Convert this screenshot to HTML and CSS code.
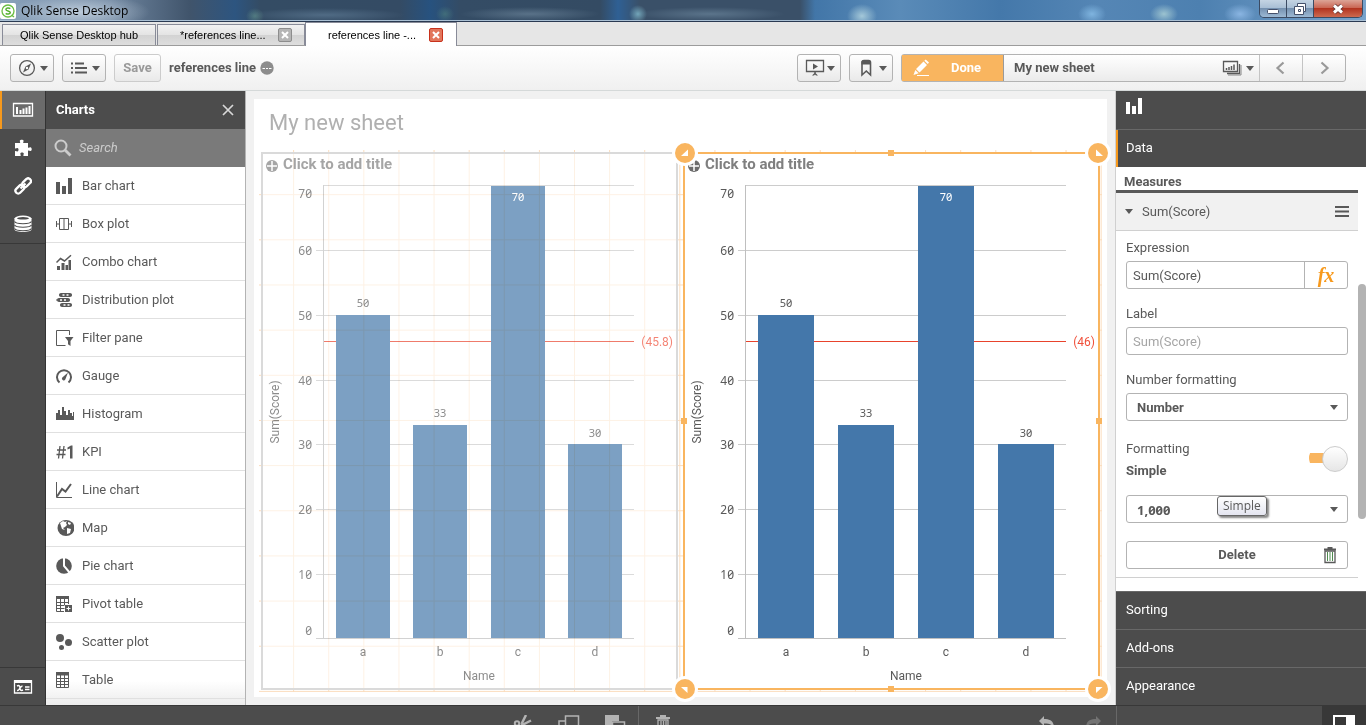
FILE: index.html
```html
<!DOCTYPE html>
<html lang="en">
<head>
<meta charset="utf-8">
<title>Qlik Sense Desktop</title>
<link rel="stylesheet" href="styles.css">
</head>
<body>
<header class="titlebar">
  <svg class="app-logo" width="16" height="16" viewBox="0 0 16 16"><rect width="16" height="16" rx="2" fill="#fff"/><circle cx="8" cy="8" r="6" fill="none" stroke="#6cbe45" stroke-width="1.3"/><path d="M11.500 12l2.500 2" stroke="#6cbe45" stroke-width="1.500"/><path d="M10.300 5.600C9 4.500 5.900 4.700 5.900 6.400c0 2 4.400 1 4.400 3.100 0 1.800-3.200 1.900-4.600.8" fill="none" stroke="#55b030" stroke-width="1.500"/></svg>
  <span class="app-name">Qlik Sense Desktop</span>
  <div class="window-controls">
    <button class="win" aria-label="Minimize"><svg width="14" height="12" viewBox="0 0 14 12"><rect x="1.500" y="6.500" width="11" height="4" rx="1" fill="#fff" stroke="#44506a"/></svg></button>
    <button class="win" aria-label="Restore"><svg width="14" height="14" viewBox="0 0 14 14"><path d="M4.500 1.500h8v8h-2v3h-9v-8h3z" fill="#fff" stroke="#44506a"/><path d="M5.500 7.500h2v2h-2zM4.500 4.500h6v5" fill="none" stroke="#44506a"/></svg></button>
    <button class="win win-close" aria-label="Close"><svg width="14" height="12" viewBox="0 0 14 12"><path d="M3 2.500l8 7M11 2.500l-8 7" stroke="#5a2a2a" stroke-width="4.500"/><path d="M3 2.500l8 7M11 2.500l-8 7" stroke="#fff" stroke-width="3"/></svg></button>
  </div>
</header>

<nav class="tabs">
  <a class="tab tab-hub" href="#">Qlik Sense Desktop hub</a>
  <div class="tab tab-doc"><a href="#">*references line...</a><button class="tab-close" aria-label="Close tab"><svg width="8" height="8" viewBox="0 0 8 8"><path d="M1 1l6 6M7 1L1 7" stroke="#fff" stroke-width="2"/></svg></button></div>
  <div class="tab tab-active"><a href="#">references line -...</a><button class="tab-close tab-close-red" aria-label="Close tab"><svg width="8" height="8" viewBox="0 0 8 8"><path d="M1 1l6 6M7 1L1 7" stroke="#fff" stroke-width="2"/></svg></button></div>
</nav>

<div class="toolbar">
  <button class="btn btn-menu" aria-label="Navigation"><svg width="18" height="18" viewBox="0 0 18 18"><circle cx="9" cy="9" r="7.400" fill="none" stroke="#595959" stroke-width="1.300"/><path d="M13 4.500L10.500 10.500 5 13.500 7.500 7.500z" fill="#595959"/><circle cx="9" cy="9" r="1.200" fill="#fff"/></svg><i class="caret"></i></button>
  <button class="btn btn-menu" aria-label="Menu"><svg width="18" height="14" viewBox="0 0 18 14"><path d="M1 2.500h2M1 7h2M1 11.500h2M5 2.500h9M5 7h12M5 11.500h12" stroke="#595959" stroke-width="2"/></svg><i class="caret"></i></button>
  <button class="btn btn-save" disabled>Save</button>
  <span class="app-title">references line</span>
  <svg class="info" width="14" height="14" viewBox="0 0 14 14"><circle cx="7" cy="7" r="6.700" fill="#8c8c8c"/><path d="M2.500 7.500h2.500M6 7.500h2M9 7.500h2.500" stroke="#fff"/></svg>
  <span class="grow"></span>
  <button class="btn btn-menu" aria-label="Storytelling"><svg width="20" height="18" viewBox="0 0 20 18"><path d="M1.500 1.500h17v11h-17z" fill="none" stroke="#595959" stroke-width="1.300"/><path d="M8 4.500l5 3-5 3zM9.300 12h1.500v3H9.300zM7 16.500l3-3 3 3h-2l-1-1-1 1z" fill="#595959"/></svg><i class="caret"></i></button>
  <button class="btn btn-menu" aria-label="Bookmarks"><svg width="18" height="18" viewBox="0 0 18 18"><path d="M5 16V3.500Q5 1.500 7 1.500h4.500q2 0 2 2V16l-4.200-4z" fill="none" stroke="#595959" stroke-width="1.600"/><path d="M4.500 5.500v-3q1-2 3-1.500h4q2 0 2.500 2v2.500z" fill="#595959"/></svg><i class="caret"></i></button>
  <div class="sheet-group">
    <button class="done"><svg width="18" height="18" viewBox="0 0 18 18"><path d="M4 10L11.500 2.500l3.500 3.500L7.500 13.500zM12.300 1.700L13.700.500l3.300 3-1.200 1.500zM3.300 11l3.400 3.300L1.500 16z" fill="#fff"/><path d="M5 16.500h12" stroke="#fff"/></svg><span>Done</span></button>
    <button class="sheet-pick"><span>My new sheet</span><svg width="20" height="16" viewBox="0 0 20 16"><path d="M1.500 1.500h14v10h-14zM17.500 4v9.500H5" fill="none" stroke="#595959" stroke-width="1.300"/><path d="M19 5v10H6" fill="none" stroke="#888"/><path d="M4.500 10V8M7 10V7M9.500 10V6M12 10V4.500" stroke="#595959" stroke-width="1.500"/></svg><i class="caret"></i></button>
    <button class="step" aria-label="Previous sheet"><svg width="14" height="14" viewBox="0 0 14 14"><path d="M9.500 1.500L3.500 7l6 5.500" fill="none" stroke="#999" stroke-width="2.200"/></svg></button>
    <button class="step" aria-label="Next sheet"><svg width="14" height="14" viewBox="0 0 14 14"><path d="M4.500 1.500l6 5.500-6 5.500" fill="none" stroke="#999" stroke-width="2.200"/></svg></button>
  </div>
</div>

<main class="workspace">
  <nav class="rail">
    <button class="rail-item rail-on" aria-label="Charts"><svg width="22" height="16" viewBox="0 0 22 16"><path d="M1.500 1.500h19v12.500h-19z" fill="none" stroke="#fff" stroke-width="1.300"/><path d="M5 12V5M8.500 12V8M11.500 12V6.500M14.500 12V5.500M17.500 12V4" stroke="#fff" stroke-width="2"/></svg></button>
    <button class="rail-item" aria-label="Custom objects"><svg width="18" height="18" viewBox="0 0 18 18"><path d="M1 4h5c.6-.9-.4-1.300-.2-2.300C6.200.3 9.300.3 9.600 1.700c.2 1-.9 1.400-.2 2.300H14v4.500c1 .8 1.500-.4 2.500-.2 1.600.3 1.600 3.400 0 3.700-1 .2-1.500-1-2.500-.2V17H9.600c-.8-1 .4-1.500.2-2.500-.3-1.500-3.200-1.500-3.500 0-.2 1 1 1.500.2 2.500H1v-4.800c1-.8 1.500.4 2.400.2 1.500-.3 1.500-3.100 0-3.400C2.500 8.800 2 10 1 9.200z" fill="#fff"/></svg></button>
    <button class="rail-item" aria-label="Master items"><svg width="18" height="18" viewBox="0 0 18 18"><g fill="none" stroke="#fff" stroke-width="2.300"><rect x="7.500" y="3" width="10" height="5.500" rx="2.700" transform="rotate(-45 12.500 5.700)"/><rect x=".8" y="9.500" width="10" height="5.500" rx="2.700" transform="rotate(-45 5.800 12.200)"/><path d="M6.500 11.500l5-5"/></g></svg></button>
    <button class="rail-item rail-last" aria-label="Fields"><svg width="18" height="18" viewBox="0 0 18 18"><path d="M.5 3v11.500c0 3.300 17 3.300 17 0V3z" fill="#fff"/><ellipse cx="9" cy="3.500" rx="8.500" ry="3" fill="#fff"/><ellipse cx="9" cy="3.300" rx="6" ry="1.300" fill="#4c4c4c"/><path d="M.5 6.500c1 3 16 3 17 0M.5 10c1 3 16 3 17 0M.5 13.500c1 3 16 3 17 0" fill="none" stroke="#4c4c4c" stroke-width="1.200"/></svg></button>
    <span class="grow"></span>
    <button class="rail-item rail-vars" aria-label="Variables"><svg width="20" height="16" viewBox="0 0 20 16"><path d="M1.500 2v12h17V2z" fill="none" stroke="#fff" stroke-width="1.300"/><path d="M1 1h18v3H1z" fill="#fff"/><path d="M4 7c2-1 3 0 3 2s1 3 3 2M9.500 7C7 7 6.500 12 4 11.500M12 8h4.500M12 10.500h4.500" fill="none" stroke="#fff" stroke-width="1.500"/></svg></button>
  </nav>

  <aside class="assets">
    <div class="assets-head"><h2>Charts</h2><button class="plain" aria-label="Close panel"><svg width="12" height="12" viewBox="0 0 12 12"><path d="M1 1l10 10M11 1L1 11" stroke="#d8d8d8" stroke-width="1.700"/></svg></button></div>
    <label class="search"><svg width="18" height="18" viewBox="0 0 18 18"><circle cx="7" cy="7" r="5.500" fill="none" stroke="#ccc" stroke-width="2"/><path d="M11 11l5.500 5.500" stroke="#ccc" stroke-width="2.800"/></svg><input type="search" placeholder="Search" aria-label="Search"></label>
    <ul class="chart-list">
      <li><button><svg viewBox="0 0 18 18"><path d="M0 5h4v12H0zM6 9h4v8H6zM12 1h4v16h-4z"/></svg>Bar chart</button></li>
      <li><button><svg viewBox="0 0 18 18"><path d="M3.500 3.500h9v11h-9zM8 3.500v11M.5 6v6M.5 9h3M12.500 9h3M15.500 6v6" fill="none" stroke="#595959"/></svg>Box plot</button></li>
      <li><button><svg viewBox="0 0 18 18"><path d="M1 13h3v4H1zM5.500 10h3v7h-3zM9.500 12h2.500v5H9.500zM12.500 7h2.500v10h-2.500z"/><path d="M.5 9.500L4.500 5.500l4 2.500L15 2.300" fill="none" stroke="#595959" stroke-width="1.500"/></svg>Combo chart</button></li>
      <li><button><svg viewBox="0 0 18 18"><path d="M3 4h13M0 9h14M4 14h12" stroke="#595959"/><rect x="3" y="2" width="13" height="4" rx="2"/><rect x="1" y="7" width="13" height="4" rx="2"/><rect x="4" y="12" width="12" height="4" rx="2"/><path d="M6.500 4h2M10.500 4h2M4 9h2M8 9h2M7.500 14h2M11.500 14h2" stroke="#fff" stroke-width="1.300"/></svg>Distribution plot</button></li>
      <li><button><svg viewBox="0 0 18 18"><path d="M13.500 6V1.500H.5v15h9" fill="none" stroke="#595959"/><path d="M9 8h8.500l-3 4v5L12 15.200V12z"/></svg>Filter pane</button></li>
      <li><button><svg viewBox="0 0 18 18"><path d="M3.500 15.500a7 7 0 1 1 9 0" fill="none" stroke="#595959" stroke-width="2"/><path d="M6.300 10.500L12 5.500l-2.500 6.500a1.800 1.800 0 1 1-3.200-1.500z"/></svg>Gauge</button></li>
      <li><button><svg viewBox="0 0 18 18"><path d="M0 15V8h2V5h2v5h2V2h2v4h2v4h2V5h2v3h2v3h1V7h1v8z"/></svg>Histogram</button></li>
      <li><button><svg viewBox="0 0 18 18"><path d="M4 3L2.500 15.500M8 3L6.500 15.500M1 7h9M.5 11.500h9" fill="none" stroke="#595959" stroke-width="1.300"/><path d="M11.500 4.500L15 2.500h1.500V15.500H14V5.500l-2.500 1z"/></svg>KPI</button></li>
      <li><button><svg viewBox="0 0 18 18"><path d="M.5 1v15.500H16" fill="none" stroke="#595959"/><path d="M1 15.500L6 8l3.500 2.500L15 3" fill="none" stroke="#595959" stroke-width="2"/></svg>Line chart</button></li>
      <li><button><svg viewBox="0 0 18 18"><ellipse cx="10" cy="9" rx="8.500" ry="8"/><path d="M4 4l3-2 2 1 2-1-1 2 1 2-2 2-2 1 2 2-3-1zM11 9l4 1-1 4-3 1zM12 3l3 1-1 2-2-1z" fill="#fff"/></svg>Map</button></li>
      <li><button><svg viewBox="0 0 18 18"><circle cx="8" cy="9" r="7.800"/><path d="M8 0v9l6 7" fill="none" stroke="#fff" stroke-width="2"/></svg>Pie chart</button></li>
      <li><button><svg viewBox="0 0 18 18"><path d="M0 1h13v3H0z"/><path d="M.5 4v12.500H8M4.500 4v12M8.500 4v6M12.500 4v5M.5 7.500h12M.5 10.500h8M.5 13.500h8" fill="none" stroke="#595959"/><path d="M9 10h7v7H9z"/><path d="M12.500 11.500v4M10.500 13.500h4" stroke="#fff"/></svg>Pivot table</button></li>
      <li><button><svg viewBox="0 0 18 18"><circle cx="4" cy="5" r="4"/><circle cx="12.500" cy="9.500" r="3.500"/><circle cx="5.500" cy="14.500" r="2.500"/></svg>Scatter plot</button></li>
      <li><button><svg viewBox="0 0 18 18"><path d="M0 1h13v3.500H0z"/><path d="M.5 4v12.500h12V4M4.500 4v12M8.500 4v12M.5 7.500h12M.5 10.500h12M.5 13.500h12" fill="none" stroke="#595959"/></svg>Table</button></li>
    </ul>
  </aside>

  <section class="canvas">
    <div class="sheet">
      <h1>My new sheet</h1>
      <div class="sheet-grid">
        <article class="tile tile-dim">
          <div class="tile-head"><svg width="12" height="12" viewBox="0 0 12 12"><circle cx="6" cy="6" r="6" fill="#808080"/><path d="M6 1v10M1 6h10" stroke="#fff" stroke-width="1.500"/></svg><h3>Click to add title</h3></div>
          <svg class="plot" viewBox="0 0 413 510" role="img" aria-label="Sum(Score) by Name, reference line 45.8">
            <path class="grid" d="M60 7.500H371M53 72.500H371M53 137.500H371M53 202.500H371M53 266.500H371M53 331.500H371M53 396.500H371"/>
            <path class="refline" d="M61 163.500H371"/>
            <path class="bar" d="M73 137h54v323H73zM150 247h54v213h-54zM228 8h54v452h-54zM305 266h54v194h-54z"/>
            <path class="axis" d="M60.500 7V461M53 460.500H371"/>
            <g class="ticks"><text x="49" y="20">70</text><text x="49" y="77">60</text><text x="49" y="142">50</text><text x="49" y="207">40</text><text x="49" y="271">30</text><text x="49" y="336">20</text><text x="49" y="401">10</text><text x="49" y="457">0</text></g>
            <g class="vals"><text x="100" y="129">50</text><text x="177" y="239">33</text><text class="inbar" x="255" y="23">70</text><text x="332" y="259">30</text></g>
            <g class="cats"><text x="100" y="478">a</text><text x="177" y="478">b</text><text x="255" y="478">c</text><text x="332" y="478">d</text><text x="216" y="502">Name</text><text transform="translate(16 234) rotate(-90)">Sum(Score)</text></g>
            <text class="reflabel" x="410" y="168">(45.8)</text>
          </svg>
        </article>
        <article class="tile tile-selected">
          <div class="tile-head"><svg width="12" height="12" viewBox="0 0 12 12"><circle cx="6" cy="6" r="6" fill="#6b6b6b"/><path d="M6 1v10M1 6h10" stroke="#fff" stroke-width="1.500"/></svg><h3>Click to add title</h3></div>
          <svg class="plot" viewBox="0 0 413 510" role="img" aria-label="Sum(Score) by Name, reference line 46">
            <path class="grid" d="M60 7.500H381M53 72.500H381M53 137.500H381M53 202.500H381M53 266.500H381M53 331.500H381M53 396.500H381"/>
            <path class="refline" d="M61 163.500H381"/>
            <path class="bar" d="M73 137h56v323H73zM153 247h56v213h-56zM233 8h56v452h-56zM313 266h56v194h-56z"/>
            <path class="axis" d="M60.500 7V461M53 460.500H381"/>
            <g class="ticks"><text x="49" y="20">70</text><text x="49" y="77">60</text><text x="49" y="142">50</text><text x="49" y="207">40</text><text x="49" y="271">30</text><text x="49" y="336">20</text><text x="49" y="401">10</text><text x="49" y="457">0</text></g>
            <g class="vals"><text x="101" y="129">50</text><text x="181" y="239">33</text><text class="inbar" x="261" y="23">70</text><text x="341" y="259">30</text></g>
            <g class="cats"><text x="101" y="478">a</text><text x="181" y="478">b</text><text x="261" y="478">c</text><text x="341" y="478">d</text><text x="221" y="502">Name</text><text transform="translate(16 234) rotate(-90)">Sum(Score)</text></g>
            <text class="reflabel" x="410" y="168">(46)</text>
          </svg>
          <span class="edge edge-t"></span><span class="edge edge-b"></span><span class="edge edge-l"></span><span class="edge edge-r"></span>
          <svg class="corner corner-tl" viewBox="0 0 26 26"><circle cx="13" cy="13" r="13" fill="#fff"/><circle cx="13" cy="13" r="10" fill="#f9b55f"/><path d="M16 9.500v6.500H9z" fill="#fff"/></svg>
          <svg class="corner corner-tr" viewBox="0 0 26 26"><circle cx="13" cy="13" r="13" fill="#fff"/><circle cx="13" cy="13" r="10" fill="#f9b55f"/><path d="M11 9.500v6.500h7z" fill="#fff"/></svg>
          <svg class="corner corner-bl" viewBox="0 0 26 26"><circle cx="13" cy="13" r="13" fill="#fff"/><circle cx="13" cy="13" r="10" fill="#f9b55f"/><path d="M9 11h6.500v6z" fill="#fff"/></svg>
          <svg class="corner corner-br" viewBox="0 0 26 26"><circle cx="13" cy="13" r="13" fill="#fff"/><circle cx="13" cy="13" r="10" fill="#f9b55f"/><path d="M11 11h6.500L11 17z" fill="#fff"/></svg>
        </article>
      </div>
    </div>
  </section>

  <aside class="props">
    <div class="props-head"><svg width="18" height="18" viewBox="0 0 18 18"><path d="M1 5h4v12H1zM7 9h4v8H7zM13 1h4v16h-4z" fill="#fff"/></svg></div>
    <button class="section section-on">Data</button>
    <div class="props-scroll">
      <div class="props-body">
        <h4>Measures</h4>
        <button class="measure"><i class="caret"></i><span>Sum(Score)</span><svg width="14" height="12" viewBox="0 0 14 12"><path d="M0 1h14M0 5.500h14M0 10h14" stroke="#595959" stroke-width="2"/></svg></button>
        <form class="fields">
          <label for="expr">Expression</label>
          <div class="combo"><input id="expr" type="text" value="Sum(Score)"><button type="button" class="fx" aria-label="Expression editor"><i>fx</i></button></div>
          <label for="lbl">Label</label>
          <input class="field" id="lbl" type="text" placeholder="Sum(Score)">
          <label for="numfmt">Number formatting</label>
          <div class="select"><select id="numfmt"><option>Number</option></select><i class="caret"></i></div>
          <div class="switch-row"><label for="fmt">Formatting<b>Simple</b></label><input id="fmt" class="switch" type="checkbox" checked></div>
          <div class="select"><select id="pattern" aria-label="Format pattern"><option>1,000</option></select><i class="caret"></i><span class="tooltip" role="tooltip">Simple</span></div>
          <button type="button" class="delete"><span>Delete</span><svg width="14" height="18" viewBox="0 0 14 18"><path d="M1 3.500h12M4.500 2h5" stroke="#595959" stroke-width="2"/><path d="M2 5h10v11.500H2z" fill="none" stroke="#595959" stroke-width="1.300"/><path d="M4.500 6v9M7 6v9M9.500 6v9" stroke="#4f8a4f"/></svg></button>
        </form>
      </div>
      <div class="scroll-track"><div class="scroll-thumb"></div></div>
    </div>
    <button class="section">Sorting</button>
    <button class="section">Add-ons</button>
    <button class="section">Appearance</button>
  </aside>
</main>

<footer class="bottombar">
  <span class="space-a"></span>
  <button aria-label="Cut"><svg width="20" height="20" viewBox="0 0 20 20"><path d="M13 0L8.500 9M18 5.500L8 10.500" stroke="#b3b3b3" stroke-width="2.500"/><circle cx="4" cy="8.500" r="2.200" fill="none" stroke="#b3b3b3" stroke-width="2"/><circle cx="8" cy="15" r="2.200" fill="none" stroke="#b3b3b3" stroke-width="2"/></svg></button>
  <button aria-label="Copy"><svg width="22" height="20" viewBox="0 0 22 20"><path d="M7.500 1h13v13h-13zM7 6H1v13h13v-4" fill="none" stroke="#b3b3b3" stroke-width="1.500"/></svg></button>
  <button aria-label="Paste"><svg width="22" height="20" viewBox="0 0 22 20"><path d="M1 0h14v6H8v9H1z" fill="#b3b3b3"/><path d="M8.500 7h12v12h-12z" fill="none" stroke="#b3b3b3" stroke-width="1.500"/></svg></button>
  <button class="with-rule" aria-label="Delete"><svg width="14" height="20" viewBox="0 0 14 20"><path d="M0 3h14M4 1h6" stroke="#b3b3b3" stroke-width="2"/><path d="M2 5h10v13H2zM5 6v12M7.500 6v12M10 6v12" fill="none" stroke="#b3b3b3" stroke-width="1.300"/></svg></button>
  <span class="space-b"></span>
  <button aria-label="Undo"><svg width="18" height="20" viewBox="0 0 18 20"><path d="M6 1v3c6 0 10 2 10 9-2-4-5-4.500-10-4.500V11L1 6z" fill="#b3b3b3"/></svg></button>
  <button aria-label="Redo"><svg width="18" height="20" viewBox="0 0 18 20"><path d="M12 1v3C6 4 2 6 2 13c2-4 5-4.500 10-4.500V11l5-5z" fill="#737373"/></svg></button>
  <div class="bottom-right"><button aria-label="Toggle properties"><svg width="22" height="20" viewBox="0 0 22 20"><path d="M0 0h22v16H0zM2 2v12h11V2z" fill="#fff" fill-rule="evenodd"/></svg></button></div>
</footer>
</body>
</html>
```
FILE: styles.css
```css
* { box-sizing: border-box; }

body {
  margin: 0;
  height: 100vh;
  overflow: hidden;
  display: flex;
  flex-direction: column;
  font: 13px/18px Roboto, "Noto Sans", sans-serif;
  color: #595959;
  background: #f1f1f1;
}

button, input, select { font: inherit; color: inherit; margin: 0; }
button { padding: 0; border: 0; background: none; }
a { color: inherit; text-decoration: none; }
h1, h2, h3, h4, ul { margin: 0; padding: 0; }
svg { display: block; flex: none; }
.grow { flex: 1; }
.plain { display: flex; }

.caret {
  flex: none;
  border: 4px solid transparent;
  border-top: 5px solid #595959;
  border-bottom: 0;
}

/* Window frame */
.titlebar {
  flex: none;
  height: 22px;
  display: flex;
  align-items: center;
  border-bottom: 1px solid #2a3a52;
  box-shadow: inset 0 -1px #a9bfd3;
  background:
    radial-gradient(70px 18px at 80px 12px, rgba(205, 218, 230, .8), transparent),
    radial-gradient(9px 8px at 255px 16px, rgba(100, 150, 142, .6), transparent),
    radial-gradient(80px 7px at 325px 15px, rgba(99, 128, 154, .6), transparent),
    radial-gradient(9px 8px at 445px 14px, rgba(78, 129, 128, .6), transparent),
    radial-gradient(70px 7px at 530px 14px, rgba(114, 139, 160, .6), transparent),
    radial-gradient(9px 9px at 638px 14px, rgba(128, 185, 204, .8), transparent),
    radial-gradient(75px 7px at 710px 14px, rgba(113, 140, 162, .6), transparent),
    radial-gradient(15px 12px at 862px 16px, #a4c8d9, transparent),
    radial-gradient(14px 10px at 1092px 14px, #7fb4df, transparent),
    radial-gradient(14px 10px at 1164px 14px, #9cc3d0, transparent),
    radial-gradient(16px 10px at 1240px 14px, #8ab5e2, transparent),
    linear-gradient(90deg, #8ba3bc 0, #6f86a0 110px, #40546b 190px, #2d5580 235px, #344c64 260px, #344b64 400px, #27527f 430px, #344c65 460px, #344b63 600px, #2f6094 618px, #3a5068 640px, #3a5068 800px, #4276a8 815px, #5a8bb8 900px, #4478aa 1000px, #5586b5 1100px, #4d80b0 1200px, #78a3cc 1366px);
}
.app-name { margin-left: 5px; font: 12px/16px "Open Sans", sans-serif; color: #000; }
.window-controls {
  display: flex;
  align-self: flex-start;
  height: 18px;
  margin: 0 3px 0 auto;
  border: 1px solid #3b4b63;
  border-top: 0;
  border-radius: 0 0 5px 5px;
  overflow: hidden;
}
.win {
  width: 27px;
  display: flex;
  align-items: center;
  justify-content: center;
  border-right: 1px solid #3b4b63;
  background: linear-gradient(#c4d4e3, #a9bfd5 45%, #7591b0 50%, #9db9d4);
}
.win-close { width: 48px; border: 0; background: linear-gradient(#dca497, #ca6755 45%, #b23420 50%, #cd6a50); }

.tabs {
  flex: none;
  height: 24px;
  display: flex;
  align-items: flex-end;
  padding-left: 2px;
  background: #e6e6e6;
  border-bottom: 1px solid #9c9c9c;
  font: 11px/14px "Liberation Sans", sans-serif;
  color: #000;
}
.tab {
  height: 21px;
  display: flex;
  align-items: center;
  border: 1px solid #888b98;
  border-bottom: 0;
  background: linear-gradient(#f2f2f2, #e4e4e4 48%, #d3d3d3 52%, #dedede);
}
.tab-hub { width: 154px; justify-content: center; margin-right: 1px; }
.tab-doc { width: 148px; padding: 0 12px 0 22px; justify-content: space-between; }
.tab-active {
  width: 152px;
  height: 24px;
  margin-bottom: -1px;
  padding: 0 13px 0 22px;
  justify-content: space-between;
  background: #fff;
}
.tab-close {
  width: 14px;
  height: 14px;
  display: flex;
  align-items: center;
  justify-content: center;
  border: 1px solid #8d8d8d;
  border-radius: 2px;
  background: #b5b5b5;
}
.tab-close-red { border-color: #c8321c; background: #e2765c; }

/* App toolbar */
.toolbar {
  flex: none;
  height: 45px;
  display: flex;
  align-items: center;
  padding: 0 20px 0 10px;
  border-bottom: 1px solid #d5d9d9;
  background: linear-gradient(#fff, #f0f0f0);
  font-weight: 700;
}
.btn {
  height: 28px;
  margin-right: 8px;
  border: 1px solid #b3b3b3;
  border-radius: 3px;
  background: linear-gradient(#fff, #e9e9e9);
}
.btn-menu { width: 44px; display: flex; align-items: center; justify-content: space-between; padding: 0 5px 0 7px; }
.btn-save { width: 47px; color: #999; border-color: #ccc; }
.info { margin-left: 4px; }
.sheet-group {
  display: flex;
  height: 28px;
  border: 1px solid #b3b3b3;
  border-radius: 3px;
  background: linear-gradient(#fff, #ebebeb);
}
.done { width: 102px; display: flex; align-items: center; padding-left: 10px; gap: 21px; border-right: 1px solid #9a9a9a; background: #f9b55f; color: #fff; }
.sheet-pick { width: 256px; display: flex; align-items: center; padding: 0 5px 0 10px; gap: 4px; border-right: 1px solid #c4c4c4; text-align: left; }
.sheet-pick span { flex: 1; }
.step { width: 42px; display: flex; align-items: center; justify-content: center; }
.step + .step { width: 43px; border-left: 1px solid #c4c4c4; }

/* Workspace */
.workspace { flex: 1; min-height: 0; display: flex; }
.rail {
  flex: none;
  width: 46px;
  display: flex;
  flex-direction: column;
  background: #4c4c4c;
  border-right: 1px solid #333;
}
.rail-item { height: 38px; display: flex; align-items: center; justify-content: center; }
.rail-on { background: #6b6b6b; border-left: 2px solid #f7991c; padding-right: 2px; }
.rail-last { height: 39px; border-bottom: 1px solid #383838; }
.rail-vars { height: 38px; border-top: 1px solid #383838; }

.assets {
  flex: none;
  width: 200px;
  display: flex;
  flex-direction: column;
  overflow: hidden;
  background: #fff;
  border-right: 1px solid #b3b3b3;
}
.assets-head {
  flex: none;
  height: 38px;
  display: flex;
  align-items: center;
  justify-content: space-between;
  padding: 0 11px 0 10px;
  background: #4c4c4c;
  color: #fff;
}
.assets-head h2 { font-size: 13px; }
.search { flex: none; height: 38px; display: flex; align-items: center; gap: 7px; padding-left: 8px; background: #7a7a7a; }
.search input { flex: 1; min-width: 0; border: 0; padding: 0; background: none; outline: 0; appearance: none; }
.search input::placeholder { color: #ccc; font-style: italic; opacity: 1; }
.chart-list { flex: 1; list-style: none; overflow: hidden; background: linear-gradient(0deg, #ececec, #fff 24px); }
.chart-list li { height: 38px; border-bottom: 1px solid #e0e0e0; }
.chart-list button { width: 100%; height: 37px; display: flex; align-items: center; gap: 8px; padding-left: 10px; }
.chart-list svg { width: 18px; height: 18px; fill: #595959; }

.canvas { flex: 1; min-width: 0; padding: 8px; background: #f1f1f1; display: flex; }
.sheet { flex: 1; min-width: 0; display: flex; flex-direction: column; padding: 0 5px 5px; background: #fff; }
.sheet h1 { height: 51px; padding: 9px 10px; font-size: 22px; line-height: 30px; font-weight: 400; color: #b0b0b0; }
.sheet-grid {
  flex: 1;
  min-height: 0;
  display: grid;
  grid-template-columns: 1fr 1fr;
  gap: 5px;
  padding: 2px;
  background-image:
    linear-gradient(270deg, #fbdcbc 1px, transparent 1px),
    linear-gradient(0deg, #fbdcbc 1px, transparent 1px);
  background-size: calc(100% / 24) 100%, 100% calc(100% / 12);
}
.tile { position: relative; min-width: 0; min-height: 0; display: flex; flex-direction: column; border: 2px solid #dadada; background: rgba(255, 255, 255, .6); }
.tile-selected { border-color: #f9b55f; background: #fff; }
.tile-dim .tile-head, .tile-dim .plot { opacity: .7; }
.tile-dim .plot { mix-blend-mode: multiply; }
.tile-head { flex: none; height: 24px; display: flex; align-items: center; gap: 5px; padding: 0 3px 4px; color: #7f7f7f; }
.tile-head svg { margin-top: 3px; }
.tile-head h3 { font-size: 15px; line-height: 20px; }
.plot { flex: 1; min-height: 0; width: 100%; }
.grid { stroke: #ccc; fill: none; }
.axis { stroke: #bfbfbf; fill: none; }
.refline { stroke: #e8432c; }
.bar { fill: #4477aa; }
.plot text { font: 12px "Noto Sans", sans-serif; font-feature-settings: "zero"; fill: #595959; text-anchor: middle; }
.plot .ticks text { text-anchor: end; }
.plot .vals text { font-size: 11px; }
.plot .vals .inbar { fill: #fff; }
.plot .cats text { font-family: Roboto, sans-serif; }
.plot .reflabel { font-family: Roboto, sans-serif; fill: #f0503a; text-anchor: end; }

/* Selection handles */
.corner { position: absolute; width: 26px; height: 26px; }
.corner-tl { left: -13px; top: -14px; }
.corner-tr { right: -13px; top: -14px; }
.corner-bl { left: -13px; bottom: -14px; }
.corner-br { right: -13px; bottom: -14px; }
.edge { position: absolute; width: 6px; height: 6px; background: #f9b55f; }
.edge-t { left: 50%; top: -4px; margin-left: -4px; }
.edge-b { left: 50%; bottom: -4px; margin-left: -4px; }
.edge-l { top: 50%; left: -4px; margin-top: -3px; }
.edge-r { top: 50%; right: -4px; margin-top: -3px; }

/* Property panel */
.props { flex: none; width: 251px; display: flex; flex-direction: column; border-left: 1px solid #d0d0d0; background: #4c4c4c; }
.props-head { flex: none; height: 38px; padding: 6px 9px; }
.section { flex: none; height: 38px; padding: 0 10px 2px; border-top: 1px solid #686868; text-align: left; color: #fff; background: #4c4c4c; }
.section-on { box-shadow: inset 2px 0 #f7991c; }
.props-scroll { flex: 1; min-height: 0; overflow: hidden; display: flex; background: #fff; }
.props-body { flex: 1; min-width: 0; }
.props-body h4 { height: 26px; padding: 6px 8px 0; line-height: 17px; font-size: 13px; border-bottom: 3px solid #595959; }
.measure { width: 100%; height: 38px; display: flex; align-items: center; gap: 9px; padding: 0 9px; border-bottom: 1px solid #d0d0d0; background: #f1f1f1; text-align: left; }
.measure span { flex: 1; }
.fields { display: flex; flex-direction: column; padding: 2px 10px 8px; border-bottom: 1px solid #d0d0d0; }
.fields > label { padding-top: 2px; line-height: 26px; }
.combo, .field, .select, .delete { height: 28px; border: 1px solid #b3b3b3; border-radius: 3px; background: #fff; }
.combo, .field { margin-bottom: 10px; }
.combo { display: flex; }
.combo input { flex: 1; min-width: 0; border: 0; padding: 1px 6px 0; background: none; }
.field { padding: 1px 6px 0; }
.field::placeholder { color: #a5a5a5; opacity: 1; }
.fx { width: 43px; border-left: 1px solid #b3b3b3; color: #f7991c; font: bold 20px/20px "Liberation Serif", serif; }
.select { position: relative; display: flex; align-items: center; padding-right: 9px; }
.select select { flex: 1; height: 26px; padding: 1px 10px 0; border: 0; appearance: none; background: none; font-weight: 700; font-family: Roboto, "Noto Sans", sans-serif; }
.switch-row { display: flex; align-items: flex-start; justify-content: space-between; height: 44px; margin: 16px 0 14px; line-height: 22px; }
.switch-row label { padding-top: 1px; }
.switch-row b { display: block; }
.switch { appearance: none; width: 39px; height: 24px; margin-top: 9px; background: linear-gradient(#f9b55f, #f9b55f) 0 7px / 30px 10px no-repeat; border-radius: 12px; display: flex; justify-content: flex-end; }
.switch::before { content: ""; width: 24px; height: 24px; border: 1px solid #ccc; border-radius: 50%; background: linear-gradient(#fff, #e6e6e6); }
.select #pattern { font-family: "Noto Sans", sans-serif; font-feature-settings: "zero"; }
.delete { display: flex; align-items: center; margin-top: 18px; padding: 0 10px 0 24px; font-weight: 700; }
.delete span { flex: 1; }
.tooltip {
  position: absolute;
  left: 90px;
  top: 0;
  padding: 0 5px;
  border: 1px solid #666;
  border-radius: 3px;
  background: linear-gradient(#fff, #e4e5f0);
  box-shadow: 2px 2px 2px #888;
  font: 12px/18px "Open Sans", sans-serif;
}
.scroll-track { flex: none; width: 8px; padding-top: 117px; }
.scroll-thumb { height: 235px; border-radius: 4px; background: #b3b3b3; }

/* Bottom bar */
.bottombar { flex: none; height: 20px; display: flex; align-items: flex-start; overflow: hidden; background: #4c4c4c; border-top: 1px solid #383838; }
.bottombar button { width: 46px; height: 40px; padding-top: 9px; display: flex; justify-content: center; }
.bottombar .with-rule { width: 48px; border-left: 1px solid #686868; }
.space-a { flex: 503; }
.space-b { flex: 340; }
.bottom-right { width: 250px; display: flex; justify-content: flex-end; border-left: 1px solid #686868; }
.bottom-right button { width: 44px; background: #383838; }
```
